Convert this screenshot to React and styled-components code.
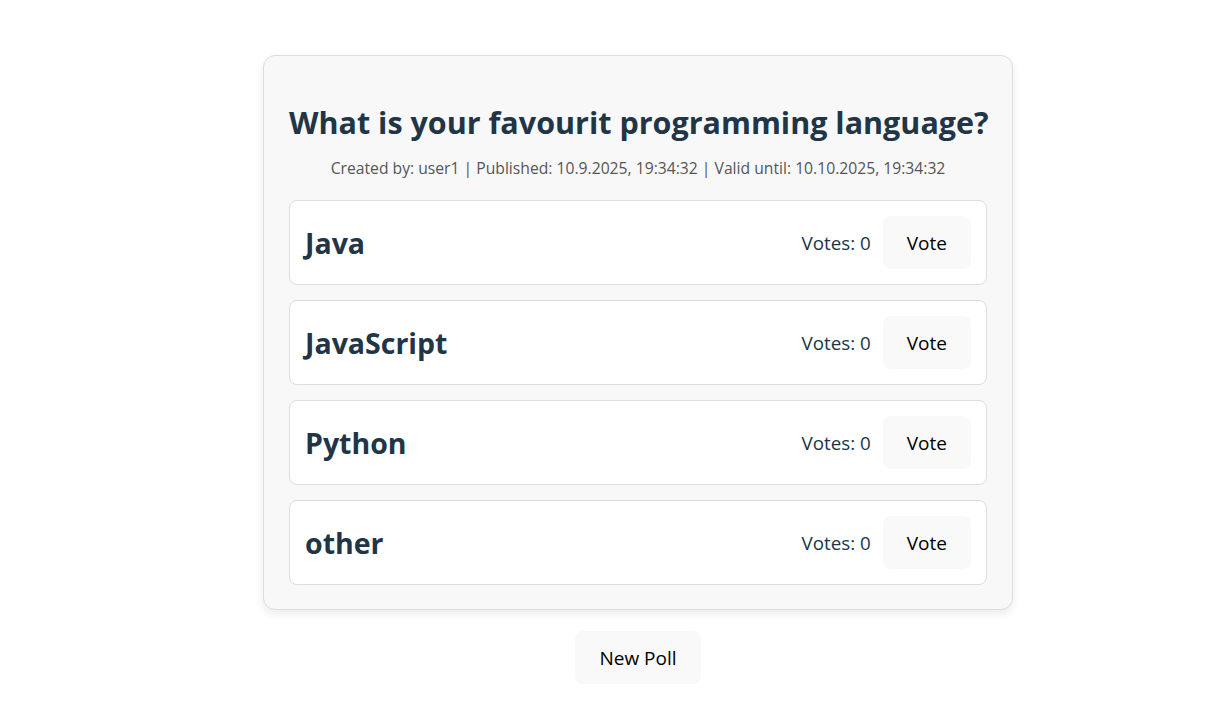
import React from 'react'
import styled, { createGlobalStyle } from 'styled-components'

const GlobalStyle = createGlobalStyle`
	body {
		margin: 0;
		background: #ffffff;
		font-family: "Open Sans", "Noto Sans", sans-serif;
		color: #213547;
	}
`

const Page = styled.div`
	display: flex;
	flex-direction: column;
	align-items: center;
	padding: 55px 0 0 47px;
`

const Card = styled.div`
	width: 750px;
	box-sizing: border-box;
	padding: 24px 25px;
	background-color: #f8f8f8;
	border: 1px solid #dddddd;
	border-radius: 12px;
	box-shadow: 0 4px 10px rgba(0, 0, 0, 0.08);
`

const Title = styled.h1`
	margin: 23px 0 15px;
	font-size: 30.5px;
	line-height: 38px;
	font-weight: 700;
	text-align: center;
	white-space: nowrap;
	color: #213547;
`

const Meta = styled.p`
	margin: 0 0 20px;
	font-size: 15.7px;
	line-height: 24px;
	text-align: center;
	color: #555555;
`

const OptionList = styled.div`
	display: flex;
	flex-direction: column;
	gap: 15px;
`

const OptionRow = styled.div`
	display: flex;
	align-items: center;
	justify-content: space-between;
	padding: 15px;
	background-color: #ffffff;
	border: 1px solid #dddddd;
	border-radius: 8px;
`

const OptionLabel = styled.h3`
	margin: 0;
	font-size: 28.5px;
	font-weight: 700;
	color: #213547;
`

const OptionRight = styled.div`
	display: flex;
	align-items: center;
	gap: 12px;
`

const VoteCount = styled.span`
	font-size: 18.8px;
	color: #213547;
`

const Button = styled.button`
	height: 53px;
	padding: 0 23px;
	font-family: inherit;
	font-size: 19px;
	color: #000000;
	background-color: #f9f9f9;
	border: 1px solid transparent;
	border-radius: 8px;
	cursor: pointer;
`

const Footer = styled.div`
	margin-top: 21px;
`

const options = ['Java', 'JavaScript', 'Python', 'other']

const App = () => {
	return (
		<Page>
			<GlobalStyle />
			<Card>
				<Title>What is your favourit programming language?</Title>
				<Meta>
					Created by: user1 | Published: 10.9.2025, 19:34:32 | Valid until: 10.10.2025, 19:34:32
				</Meta>
				<OptionList>
					{options.map(name => (
						<OptionRow key={name}>
							<OptionLabel>{name}</OptionLabel>
							<OptionRight>
								<VoteCount>Votes: 0</VoteCount>
								<Button>Vote</Button>
							</OptionRight>
						</OptionRow>
					))}
				</OptionList>
			</Card>
			<Footer>
				<Button>New Poll</Button>
			</Footer>
		</Page>
	)
}

export default App
